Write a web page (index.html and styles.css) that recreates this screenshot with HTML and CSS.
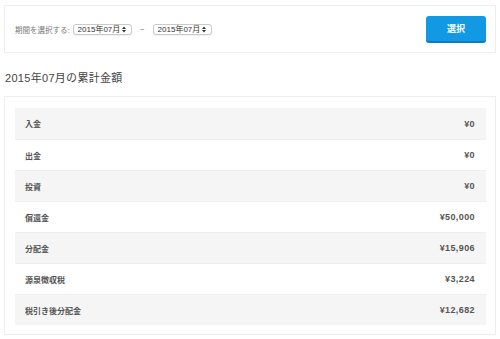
FILE: index.html
```html
<!DOCTYPE html>
<html lang="ja">
<head>
  <meta charset="UTF-8">
  <meta name="viewport" content="width=device-width, initial-scale=1.0">
  <title>累計金額</title>
  <link rel="stylesheet" href="styles.css">
</head>
<body>
  <div class="page">
    <form class="panel period">
      <div class="period-fields">
        <span class="period-label">期間を選択する:</span>
        <label class="select">
          <select>
            <option>2015年07月</option>
          </select>
          <svg class="select-arrow" width="4" height="7" viewBox="0 0 4 7"><path d="M0 3 L2 0.5 L4 3 Z M0 4 L2 6.5 L4 4 Z" fill="#333"/></svg>
        </label>
        <span class="tilde">~</span>
        <label class="select">
          <select>
            <option>2015年07月</option>
          </select>
          <svg class="select-arrow" width="4" height="7" viewBox="0 0 4 7"><path d="M0 3 L2 0.5 L4 3 Z M0 4 L2 6.5 L4 4 Z" fill="#333"/></svg>
        </label>
      </div>
      <button type="submit">選択</button>
    </form>

    <h2 class="title">2015年07月の累計金額</h2>

    <div class="panel summary">
      <div class="row"><span>入金</span><span class="amount">¥0</span></div>
      <div class="row"><span>出金</span><span class="amount">¥0</span></div>
      <div class="row"><span>投資</span><span class="amount">¥0</span></div>
      <div class="row"><span>償還金</span><span class="amount">¥50,000</span></div>
      <div class="row"><span>分配金</span><span class="amount">¥15,906</span></div>
      <div class="row"><span>源泉徴収税</span><span class="amount">¥3,224</span></div>
      <div class="row"><span>税引き後分配金</span><span class="amount">¥12,682</span></div>
    </div>
  </div>
</body>
</html>
```

FILE: styles.css
```css
/* Styles globaux */
body {
  margin: 0;
  background: #fff;
  color: #555;
  font-family: "Liberation Sans", "Noto Sans CJK JP", sans-serif;
}

.page {
  padding: 5px 4px 0 4px;
}

.panel {
  border: 1px solid #eee;
  background: #fff;
}

/* Période */
.period {
  display: flex;
  align-items: center;
  justify-content: space-between;
  height: 46px;
  padding: 0 9px 0 10px;
  margin: 0;
}

.period-fields {
  display: flex;
  align-items: center;
  font-size: 7.5px;
  color: #777;
}

.period-label {
  margin-right: 3px;
}

.select {
  position: relative;
  display: inline-block;
}

.select select {
  appearance: none;
  -webkit-appearance: none;
  width: 59px;
  height: 11px;
  padding: 0 0 0 4px;
  border: 1px solid #c8c8c8;
  border-radius: 3px;
  background: #fff;
  font-family: inherit;
  font-size: 8px;
  line-height: 9px;
  color: #333;
  box-shadow: 0 1px 1px rgba(0, 0, 0, 0.06);
}

.select-arrow {
  position: absolute;
  right: 6px;
  top: 2px;
}

.tilde {
  width: 21px;
  text-align: center;
  color: #666;
}

button {
  width: 60px;
  height: 27px;
  padding: 0;
  border: none;
  border-bottom: 2px solid #0a7cc4;
  border-radius: 3px;
  background-color: #1199e3;
  color: #fff;
  font-family: inherit;
  font-size: 9px;
  font-weight: bold;
  cursor: pointer;
}

.title {
  margin: 0;
  height: 43px;
  line-height: 50px;
  padding-left: 1px;
  font-size: 11px;
  font-weight: normal;
  color: #444;
  letter-spacing: 0.3px;
}

/* Récapitulatif */
.summary {
  padding: 11px 9px 9px 10px;
}

.row {
  display: flex;
  align-items: center;
  justify-content: space-between;
  height: 30px;
  padding: 0 11px 0 10px;
  border-top: 1px solid #eee;
  font-size: 8px;
  font-weight: bold;
  color: #555;
}

.row:first-child {
  border-top: none;
  height: 31px;
}

.row:nth-child(odd) {
  background: #f5f5f5;
}

.row .amount {
  font-size: 9px;
  letter-spacing: 0.4px;
}
```
